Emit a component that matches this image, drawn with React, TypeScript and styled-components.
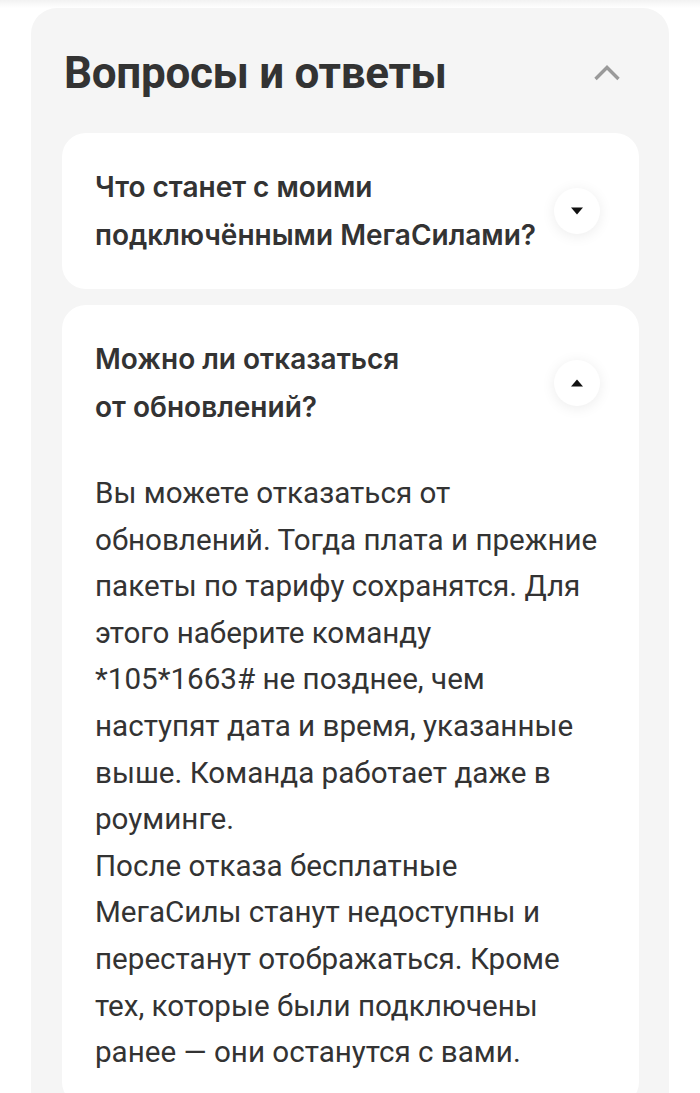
import React from "react";
import styled, { createGlobalStyle } from "styled-components";

const Global = createGlobalStyle`
  html, body { margin: 0; padding: 0; background: #ffffff; }
  body { font-family: Roboto, "Noto Sans", sans-serif; color: #333333; }
`;

const Page = styled.div`
  padding: 8px 31px 0 31px;
  background: linear-gradient(#f2f2f2 0px, #ffffff 8px);
`;

const Panel = styled.section`
  background: #f5f5f5;
  border-radius: 26px 26px 0 0;
  padding: 40px 30px 0 31px;
  min-height: 1085px;
  box-sizing: border-box;
`;

const Header = styled.div`
  display: flex;
  align-items: center;
  justify-content: space-between;
  padding: 0 18px 0 2px;
  margin-bottom: 35px;
`;

const Title = styled.h2`
  margin: 0;
  font-family: Roboto, sans-serif;
  font-weight: 700;
  font-size: 44px;
  line-height: 50px;
  color: #333333;
  letter-spacing: -0.3px;
`;

const Chevron = styled.svg`
  width: 28px;
  height: 18px;
  display: block;
`;

const List = styled.div`
  display: flex;
  flex-direction: column;
  gap: 16px;
`;

const Card = styled.div`
  background: #ffffff;
  border-radius: 24px;
  padding: 30px 33px 30px 33px;
`;

const QuestionRow = styled.div`
  display: flex;
  align-items: center;
  justify-content: space-between;
`;

const Question = styled.div`
  font-family: Inter, "Noto Sans", sans-serif;
  font-weight: 600;
  font-size: 28px;
  line-height: 48px;
  color: #333333;
`;

const Toggle = styled.div`
  width: 46px;
  height: 46px;
  border-radius: 50%;
  background: #ffffff;
  box-shadow: 0 2px 14px rgba(0, 0, 0, 0.08);
  display: flex;
  align-items: center;
  justify-content: center;
  margin-right: 6px;
  flex-shrink: 0;
`;

const Answer = styled.p`
  margin: 39px 0 0 0;
  font-family: Roboto, sans-serif;
  font-weight: 400;
  font-size: 29.6px;
  line-height: 46.6px;
  color: #333333;
`;

const Triangle = ({ up }: { up?: boolean }) => (
  <svg width="12" height="8" viewBox="0 0 12 8">
    {up ? <path d="M6 0.5L12 7.5H0Z" fill="#111" /> : <path d="M0 0.5H12L6 7.5Z" fill="#111" />}
  </svg>
);

const answerLines = [
  "Вы можете отказаться от",
  "обновлений. Тогда плата и прежние",
  "пакеты по тарифу сохранятся. Для",
  "этого наберите команду",
  "*105*1663# не позднее, чем",
  "наступят дата и время, указанные",
  "выше. Команда работает даже в",
  "роуминге.",
  "После отказа бесплатные",
  "МегаСилы станут недоступны и",
  "перестанут отображаться. Кроме",
  "тех, которые были подключены",
  "ранее — они останутся с вами.",
];

export default function App() {
  return (
    <>
      <Global />
      <Page>
        <Panel>
          <Header>
            <Title>Вопросы и ответы</Title>
            <Chevron viewBox="0 0 28 18">
              <path d="M2.5 15L14 3.5L25.5 15" fill="none" stroke="#9a9a9a" strokeWidth="3.4" />
            </Chevron>
          </Header>
          <List>
            <Card>
              <QuestionRow>
                <Question>
                  Что станет с моими
                  <br />
                  подключёнными МегаСилами?
                </Question>
                <Toggle>
                  <Triangle />
                </Toggle>
              </QuestionRow>
            </Card>
            <Card>
              <QuestionRow>
                <Question>
                  Можно ли отказаться
                  <br />
                  от обновлений?
                </Question>
                <Toggle>
                  <Triangle up />
                </Toggle>
              </QuestionRow>
              <Answer>
                {answerLines.map((l, i) => (
                  <React.Fragment key={i}>
                    {l}
                    {i < answerLines.length - 1 && <br />}
                  </React.Fragment>
                ))}
              </Answer>
            </Card>
          </List>
        </Panel>
      </Page>
    </>
  );
}
